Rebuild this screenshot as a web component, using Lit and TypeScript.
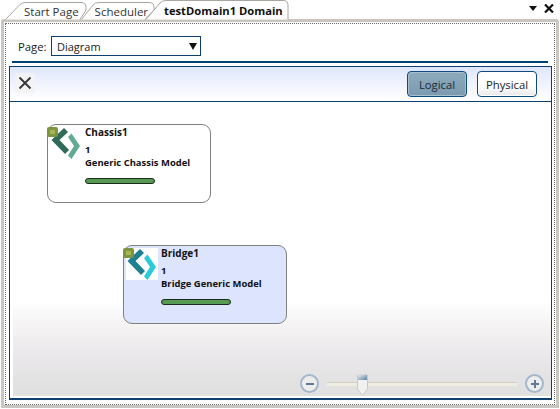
import { LitElement, html, css, svg } from 'lit';
import { customElement, property } from 'lit/decorators.js';

const logo = (dark: string, light: string) => svg`
  <svg class="logo" width="32" height="34" viewBox="0 0 32 34">
    <path d="M14 1 L18 5 L9.5 13 L19 23 L15 27 L1.5 13 Z" fill=${dark} />
    <path d="M18 10 L21.5 6.5 L30 19 L21.5 32 L18 28.5 L24 19 Z" fill=${light} />
  </svg>`;

@customElement('device-node')
class DeviceNode extends LitElement {
  @property() name = '';
  @property() model = '';
  @property() dark = '';
  @property() light = '';
  @property({ type: Boolean }) selected = false;

  static styles = css`
    :host {
      position: absolute;
      display: block;
    }
    .card {
      box-sizing: border-box;
      height: 79px;
      border: 1px solid #808080;
      border-radius: 9px;
      background: #fff;
      display: flex;
      font: bold 9.45px/13px 'Open Sans', sans-serif;
      color: #111;
    }
    .card.selected {
      background: #dde4fd;
    }
    .icon {
      position: relative;
      width: 32px;
      height: 32px;
      margin: 2px 0 0 2px;
      flex: none;
    }
    .selected .icon {
      background: #fff;
    }
    .logo {
      display: block;
      position: absolute;
      left: 0;
      top: 0;
    }
    .status {
      position: absolute;
      left: -3px;
      top: 0;
      box-sizing: border-box;
      width: 11px;
      height: 10px;
      border-radius: 2px;
      background: #a6b84f;
      border: 3px solid #7d9440;
    }
    .text {
      padding: 1px 0 0 3px;
      white-space: nowrap;
    }
    .name {
      font-size: 10px;
    }
    .count {
      margin-top: 4px;
    }
    .bar {
      box-sizing: border-box;
      width: 70px;
      height: 6px;
      margin-top: 9px;
      border: 1px solid #1d2b1d;
      border-radius: 3px;
      background: #569a53;
    }
  `;

  render() {
    return html`
      <div class="card ${this.selected ? 'selected' : ''}">
        <div class="icon">${logo(this.dark, this.light)}<span class="status"></span></div>
        <div class="text">
          <div class="name">${this.name}</div>
          <div class="count">1</div>
          <div>${this.model}</div>
          <div class="bar"></div>
        </div>
      </div>
    `;
  }
}

@customElement('app-root')
class AppRoot extends LitElement {
  static styles = css`
    :host {
      display: block;
      width: 560px;
      height: 409px;
      position: relative;
      overflow: hidden;
      background: #fff;
      font: 11.3px 'Open Sans', sans-serif;
      color: #222;
    }
    .strip {
      position: relative;
      height: 19px;
      display: flex;
      align-items: flex-start;
    }
    .tab-shapes {
      position: absolute;
      left: 0;
      top: 0;
    }
    .tab {
      position: relative;
      padding-top: 4px;
      line-height: 16px;
      font-size: 11.5px;
      color: #333;
      white-space: nowrap;
    }
    .tab.start {
      margin-left: 24px;
    }
    .tab.sched {
      margin-left: 16px;
    }
    .tab.active {
      margin-left: 16px;
      padding-top: 3px;
      font-weight: bold;
      font-size: 11.2px;
      color: #111;
    }
    .win-btns {
      position: absolute;
      right: 6px;
      top: 4px;
      display: flex;
      gap: 7px;
      align-items: center;
    }
    .frame {
      box-sizing: border-box;
      height: 389px;
      margin: 0 1px;
      width: 558px;
      border: 3px solid #c9c6c1;
      border-radius: 3px 3px 0 0;
      background: #fff;
      padding: 1px 1px 0 1px;
    }
    .dots {
      box-sizing: border-box;
      height: 100%;
      border: 1px dotted #666;
      padding: 12px 3px 4px 3px;
      display: flex;
      flex-direction: column;
    }
    .page-row {
      display: flex;
      align-items: center;
      height: 20px;
      padding-left: 9px;
      gap: 6px;
    }
    .page-row > span {
      width: 27px;
      white-space: nowrap;
    }
    .select {
      box-sizing: border-box;
      width: 150px;
      height: 20px;
      border: 1px solid #0d3f70;
      display: flex;
      align-items: center;
      justify-content: space-between;
      padding: 0 3px 0 5px;
      font-size: 11px;
    }
    .caret {
      width: 0;
      height: 0;
      border-left: 4px solid transparent;
      border-right: 4px solid transparent;
      border-top: 7px solid #111;
    }
    .rule {
      height: 2px;
      flex: none;
      background: #003f72;
      margin: 5px 3px 3px 3px;
    }
    .diagram {
      flex: 1;
      position: relative;
      border: 1px solid #0d3f70;
      border-bottom-width: 2px;
      margin-right: -1px;
      display: flex;
      flex-direction: column;
    }
    .toolbar {
      box-sizing: border-box;
      height: 35px;
      flex: none;
      border-bottom: 1px solid #0d3f70;
      background: linear-gradient(#dfe6fc, #f4f6fe 60%, #fff);
      display: flex;
      align-items: center;
      padding: 0 14px 0 5px;
    }
    .close {
      width: 20px;
      height: 20px;
      border-radius: 3px;
      background: #f3f3f5;
      display: flex;
      align-items: center;
      justify-content: center;
      margin: -2px auto 0 0;
    }
    .mode {
      box-sizing: border-box;
      width: 60px;
      height: 26px;
      border: 1px solid #0d4a80;
      border-radius: 4px;
      display: flex;
      align-items: center;
      justify-content: center;
      font-size: 11.3px;
      color: #222;
    }
    .mode.on {
      background: linear-gradient(#8eaabd, #7b9ab1);
      box-shadow: inset 0 0 0 1px #a9bfce;
      color: #1c2a33;
      margin-right: 10px;
    }
    .mode.off {
      background: linear-gradient(#fff 55%, #e9e9e9);
      box-shadow: inset 0 0 0 1px #fff;
    }
    .canvas {
      flex: 1;
      position: relative;
      margin: 0 0 2px 3px;
      background: linear-gradient(#fff 0, #fff 68%, #f6f4f5 75%, #e8e6e8 88%, #e0e0e0 100%);
    }
    .zoom {
      position: absolute;
      left: 287px;
      right: 0;
      bottom: 2px;
      height: 21px;
      display: flex;
      align-items: center;
    }
    .round {
      box-sizing: border-box;
      flex: none;
      width: 19px;
      height: 19px;
      border-radius: 50%;
      border: 2px solid #a3b8ca;
      background: #ededed;
      display: flex;
      align-items: center;
      justify-content: center;
    }
    .track {
      position: relative;
      flex: none;
      width: 190px;
      height: 3px;
      margin: 0 8px;
      background: #efece2;
      border-top: 1px solid #d3d0c8;
    }
    .thumb {
      position: absolute;
      left: 30px;
      top: -9px;
    }
  `;

  render() {
    return html`
      <div class="strip">
        <svg class="tab-shapes" width="300" height="20" viewBox="0 0 300 20">
          <path d="M5.5 19.5 L20 4.5 Q22 2.5 26 2.5 L81 2.5 Q86 2.5 86 7 L86 10 L80 19.5" fill="#fff" stroke="#a9a6a0" />
          <path d="M81.5 19.5 L93 5 Q95 2.5 99 2.5 L149 2.5 Q154 2.5 154 7 L154 10 L145 19.5" fill="#fff" stroke="#a9a6a0" />
          <path d="M146 19.5 L160 3 Q162 0.5 166 0.5 L283 0.5 Q288 0.5 288 5 L288 19.5" fill="#fff" stroke="#a9a6a0" />
        </svg>
        <span class="tab start">Start Page</span>
        <span class="tab sched">Scheduler</span>
        <span class="tab active">testDomain1 Domain</span>
        <div class="win-btns">
          <svg width="8" height="5" viewBox="0 0 8 5"><path d="M0 0H8L4 5Z" fill="#111" /></svg>
          <svg width="10" height="9" viewBox="0 0 10 9">
            <path d="M1 0.5L9 8.5M9 0.5L1 8.5" stroke="#111" stroke-width="2.2" />
          </svg>
        </div>
      </div>
      <div class="frame">
        <div class="dots">
          <div class="page-row">
            <span>Page:</span>
            <div class="select"><span>Diagram</span><span class="caret"></span></div>
          </div>
          <div class="rule"></div>
          <div class="diagram">
            <div class="toolbar">
              <div class="close">
                <svg width="14" height="14" viewBox="0 0 14 14">
                  <path d="M1.5 1.5L12.5 12.5M12.5 1.5L1.5 12.5" stroke="#333" stroke-width="1.8" />
                </svg>
              </div>
              <div class="mode on">Logical</div>
              <div class="mode off">Physical</div>
            </div>
            <div class="canvas">
              <device-node
                style="left:34px;top:22px;width:164px"
                name="Chassis1"
                model="Generic Chassis Model"
                dark="#2f6a5b"
                light="#62ab93"
              ></device-node>
              <device-node
                style="left:110px;top:143px;width:164px"
                name="Bridge1"
                model="Bridge Generic Model"
                dark="#1f7f92"
                light="#2bcbdc"
                selected
              ></device-node>
              <div class="zoom">
                <span class="round">
                  <svg width="8" height="8" viewBox="0 0 8 8"><path d="M0 4H8" stroke="#5f7b94" stroke-width="2" /></svg>
                </span>
                <div class="track">
                  <svg class="thumb" width="11" height="22" viewBox="0 0 11 22">
                    <defs>
                      <linearGradient id="th" x1="0" x2="1" y1="0" y2="1">
                        <stop offset="0" stop-color="#e6ecf2" />
                        <stop offset="1" stop-color="#5d7f9f" />
                      </linearGradient>
                    </defs>
                    <path d="M0.5 1H10.5V15L5.5 21.5L0.5 15Z" fill="#f1f1f1" stroke="#c9c9c9" />
                    <rect x="1" y="1" width="9" height="5" fill="url(#th)" />
                  </svg>
                </div>
                <span class="round">
                  <svg width="8" height="8" viewBox="0 0 8 8">
                    <path d="M0 4H8M4 0V8" stroke="#5f7b94" stroke-width="2" />
                  </svg>
                </span>
              </div>
            </div>
          </div>
        </div>
      </div>
    `;
  }
}
